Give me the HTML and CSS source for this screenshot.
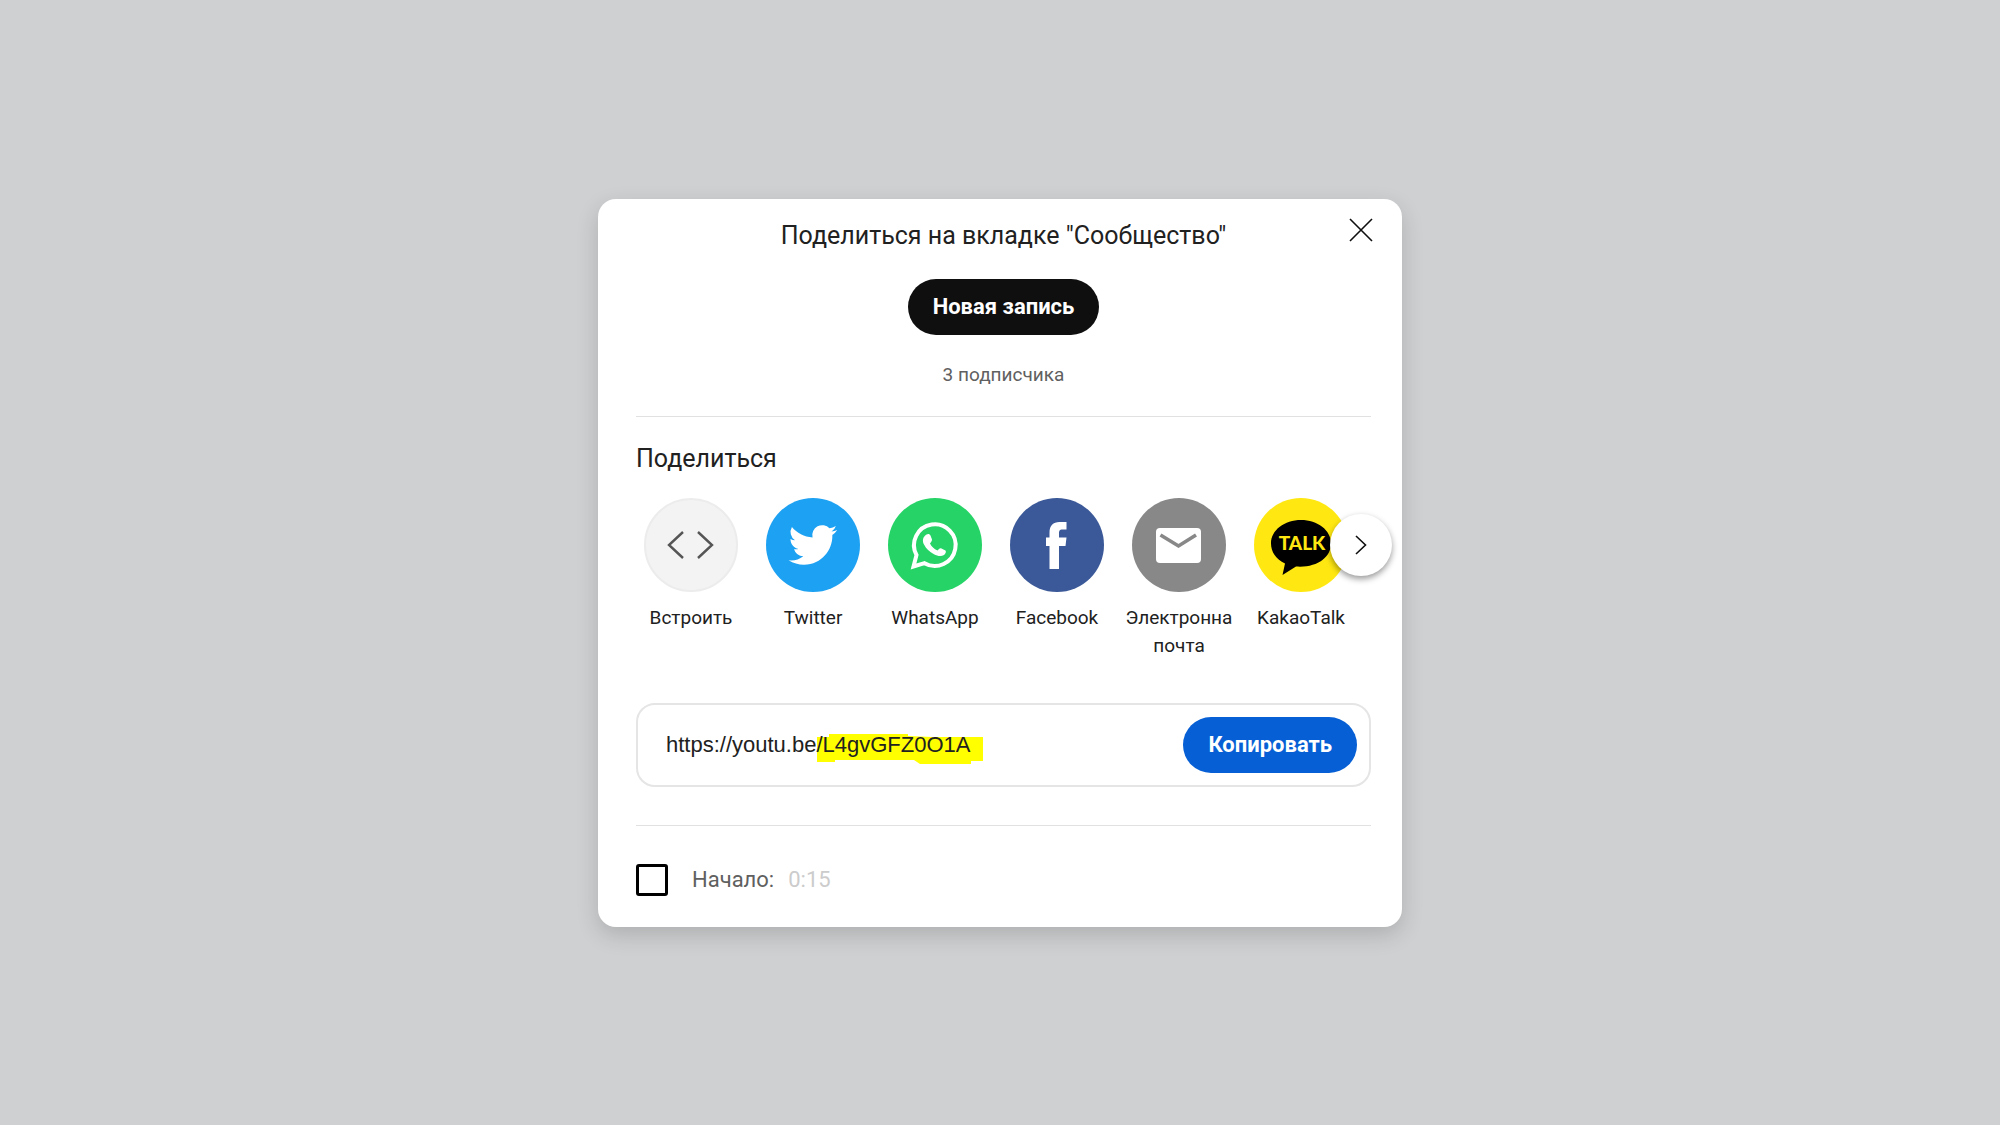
FILE: index.html
```html
<!DOCTYPE html>
<html lang="ru">
<head>
  <meta charset="UTF-8">
  <meta name="viewport" content="width=device-width, initial-scale=1.0">
  <title>Поделиться</title>
  <link rel="stylesheet" href="styles.css">
</head>
<body>
  <div class="dialog" role="dialog" aria-labelledby="community-title">
    <button class="close-button" aria-label="Закрыть">
      <svg width="24" height="24" viewBox="0 0 24 24"><path d="M1 1L23 23M23 1L1 23"/></svg>
    </button>

    <section class="community">
      <h2 id="community-title">Поделиться на вкладке "Сообщество"</h2>
      <button class="pill pill-dark">Новая запись</button>
      <p class="subscribers">3 подписчика</p>
    </section>

    <section class="share">
      <h2>Поделиться</h2>
      <div class="targets">
        <ul class="target-list">
          <li>
            <button class="target">
              <svg class="icon" viewBox="0 0 94 94">
                <circle cx="47" cy="47" r="46" fill="#f3f3f3" stroke="#ececec" stroke-width="2"/>
                <path d="M39 34L25 47L39 60M54 34L68 47L54 60" fill="none" stroke="#555" stroke-width="2.4"/>
              </svg>
              <span>Встроить</span>
            </button>
          </li>
          <li>
            <button class="target">
              <svg class="icon" viewBox="0 0 94 94">
                <circle cx="47" cy="47" r="47" fill="#1da1f2"/>
                <path transform="translate(22.6 22.6) scale(2.03)" fill="#fff" d="M23.95 4.57a10 10 0 0 1-2.82.77 4.96 4.96 0 0 0 2.16-2.72c-.95.56-2 .96-3.13 1.18a4.92 4.92 0 0 0-8.38 4.48C7.69 8.09 4.07 6.13 1.64 3.16a4.92 4.92 0 0 0 1.52 6.57 4.9 4.9 0 0 1-2.23-.61v.06c0 2.38 1.7 4.37 3.95 4.82a5 5 0 0 1-2.21.09 4.94 4.94 0 0 0 4.6 3.42A9.87 9.87 0 0 1 0 19.54a13.99 13.99 0 0 0 7.55 2.21c9.05 0 14-7.5 14-13.98 0-.21 0-.42-.02-.63a9.94 9.94 0 0 0 2.42-2.57z"/>
              </svg>
              <span>Twitter</span>
            </button>
          </li>
          <li>
            <button class="target">
              <svg class="icon" viewBox="0 0 94 94">
                <circle cx="47" cy="47" r="47" fill="#25d366"/>
                <path d="M25.500 68.500L28.500 57A20.800 20.800 0 1 1 36.500 65.200Z" fill="none" stroke="#fff" stroke-width="4"/>
                <path d="M38.500 36.500C40 35.500 42 36 42.500 37.500L44 41.500C44.300 43 42.500 44.500 42 45.500C43.500 48.500 46 51 49.500 52.500C50.700 51.500 51.500 50 53 50.300L57.500 52.500C58.500 53.500 57.500 56 56 57C53 59 49.500 58 46 56.300C41.500 54 38 50.500 36 46.500C34.200 43 34.500 39 38.500 36.500Z" fill="#fff"/>
              </svg>
              <span>WhatsApp</span>
            </button>
          </li>
          <li>
            <button class="target">
              <svg class="icon" viewBox="0 0 94 94">
                <circle cx="47" cy="47" r="47" fill="#3b5998"/>
                <path d="M39.500 71V48H36V39.500H39.500V35C39.500 27.500 43 24 49.500 24H56.500V31.500H52.500C49.500 31.500 49 33 49 35.500V39.500H56.500L55.500 48H49V71Z" fill="#fff"/>
              </svg>
              <span>Facebook</span>
            </button>
          </li>
          <li>
            <button class="target">
              <svg class="icon" viewBox="0 0 94 94">
                <circle cx="47" cy="47" r="47" fill="#888"/>
                <rect x="24" y="30" width="45" height="35" rx="4" fill="#fff"/>
                <path d="M28.500 37L46.500 48L64 37" fill="none" stroke="#888" stroke-width="3.600"/>
              </svg>
              <span>Электронна почта</span>
            </button>
          </li>
          <li>
            <button class="target">
              <svg class="icon" viewBox="0 0 94 94">
                <circle cx="47" cy="47" r="47" fill="#ffe812"/>
                <path d="M47 22C30.500 22 17 32 17 45.500C17 54 22 61 31 65.500L28.500 77L42 68.500C63 70 77 59.500 77 45.500C77 32 63.500 22 47 22Z" fill="#000"/>
                <text class="talk" x="48" y="51.500" text-anchor="middle">TALK</text>
              </svg>
              <span>KakaoTalk</span>
            </button>
          </li>
        </ul>
        <button class="next-button" aria-label="Далее">
          <svg width="12" height="20" viewBox="0 0 12 20"><path d="M1 1L10.500 10L1 19"/></svg>
        </button>
      </div>
    </section>

    <div class="link-box">
      <div class="link-field">
        <!-- marker stroke behind the video id -->
        <svg class="marker" width="166" height="30" viewBox="0 0 166 30">
          <path d="M0 3H12V0H91V2L115 3H166V27H154V30H103L97 26H18V28H0Z"/>
        </svg>
        <input type="text" class="link-input" value="https://youtu.be/L4gvGFZ0O1A" aria-label="Ссылка" readonly>
      </div>
      <button class="pill pill-blue">Копировать</button>
    </div>

    <div class="start">
      <input type="checkbox" id="start-at" class="start-check">
      <label for="start-at">Начало:</label>
      <input type="text" class="start-time" value="0:15" aria-label="Время начала" disabled>
    </div>
  </div>
</body>
</html>
```

FILE: styles.css
```css
* {
  box-sizing: border-box;
}

body {
  margin: 0;
  min-height: 100vh;
  display: flex;
  justify-content: center;
  align-items: center;
  background-color: #cfd0d1;
  font-family: Roboto, Arial, sans-serif;
  color: #212121;
}

button,
input {
  font-family: inherit;
  border: none;
  background: none;
  padding: 0;
  margin: 0;
}

button {
  cursor: pointer;
}

h2,
p,
ul {
  margin: 0;
  padding: 0;
}

h2 {
  font-size: 25px;
  font-weight: 400;
  line-height: 34px;
}

.dialog {
  position: relative;
  width: 100%;
  max-width: 804px;
  padding: 20px 31px 31px 38px;
  background-color: #fff;
  border-radius: 18px;
  box-shadow: 0 8px 22px rgba(0, 0, 0, 0.16);
}

.close-button {
  position: absolute;
  top: 11px;
  right: 21px;
  width: 40px;
  height: 40px;
  display: flex;
  justify-content: center;
  align-items: center;
}

.close-button path,
.next-button path {
  fill: none;
  stroke: #0f0f0f;
  stroke-width: 1.6;
}

.community {
  display: flex;
  flex-direction: column;
  align-items: center;
  gap: 26px;
  padding-bottom: 27px;
  border-bottom: 1px solid #e1e1e1;
}

.pill {
  height: 56px;
  padding: 0 25px;
  border-radius: 28px;
  font-size: 22px;
  font-weight: 700;
  color: #fff;
}

.pill-dark {
  background-color: #0f0f0f;
}

.pill-blue {
  background-color: #065fd4;
}

.subscribers {
  font-size: 19px;
  line-height: 28px;
  color: #606060;
}

.share {
  padding: 25px 0 43px;
}

.targets {
  position: relative;
  margin-top: 22px;
}

.target-list {
  display: flex;
  gap: 12px;
  list-style: none;
}

.target {
  display: flex;
  flex-direction: column;
  align-items: center;
  gap: 12px;
  width: 110px;
  font-size: 19px;
  line-height: 28px;
  color: #212121;
}

.icon {
  width: 94px;
  height: 94px;
}

.talk {
  font-family: Lato, sans-serif;
  font-size: 19px;
  font-weight: 900;
  fill: #ffe812;
}

.next-button {
  position: absolute;
  top: 16px;
  right: -21px;
  width: 62px;
  height: 62px;
  display: flex;
  justify-content: center;
  align-items: center;
  background-color: #fff;
  border-radius: 50%;
  box-shadow: 0 3px 6px rgba(0, 0, 0, 0.4);
}

.link-box {
  display: flex;
  align-items: center;
  height: 84px;
  padding: 0 12px 0 28px;
  border: 2px solid #e5e5e5;
  border-radius: 19px;
}

.link-field {
  position: relative;
  flex: 1;
}

.marker {
  position: absolute;
  top: 7px;
  left: 151px;
  fill: #ff0;
}

.link-input {
  position: relative;
  width: 100%;
  height: 36px;
  font-family: "Liberation Sans", Arial, sans-serif;
  font-size: 22px;
  color: #212121;
}

.start {
  display: flex;
  align-items: center;
  margin-top: 38px;
  padding-top: 38px;
  border-top: 1px solid #e1e1e1;
  font-size: 22px;
  line-height: 32px;
  color: #606060;
}

.start-check {
  appearance: none;
  width: 32px;
  height: 32px;
  margin-right: 24px;
  border: 3px solid #000;
  border-radius: 3px;
}

.start-time {
  width: 80px;
  margin-left: 14px;
  font-size: 22px;
  color: #ccc;
}
```
